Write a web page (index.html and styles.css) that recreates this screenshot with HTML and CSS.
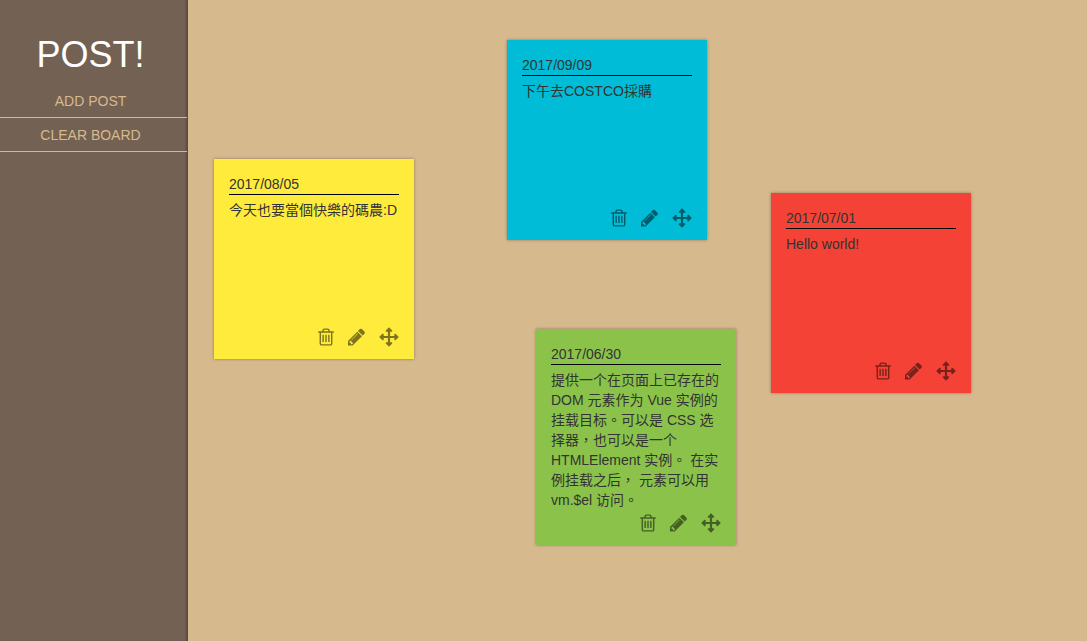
FILE: index.html
```html
<!DOCTYPE html>
<html lang="zh-Hant">
<head>
<meta charset="utf-8">
<meta name="viewport" content="width=device-width, initial-scale=1">
<title>POST!</title>
<link rel="stylesheet" href="styles.css">
</head>
<body>
<svg class="sprite" aria-hidden="true">
  <symbol id="trash" viewBox="179 0 1434 1792"><path d="M704 736v576q0 14-9 23t-23 9h-64q-14 0-23-9t-9-23v-576q0-14 9-23t23-9h64q14 0 23 9t9 23zm256 0v576q0 14-9 23t-23 9h-64q-14 0-23-9t-9-23v-576q0-14 9-23t23-9h64q14 0 23 9t9 23zm256 0v576q0 14-9 23t-23 9h-64q-14 0-23-9t-9-23v-576q0-14 9-23t23-9h64q14 0 23 9t9 23zm128 724v-948h-896v948q0 22 7 40.5t14.5 27 10.5 8.5h832q3 0 10.5-8.5t14.5-27 7-40.5zm-672-1076h448l-48-117q-7-9-17-11h-317q-10 2-17 11zm928 32v64q0 14-9 23t-23 9h-96v948q0 83-47 143.5t-113 60.5h-832q-66 0-113-58.5t-47-141.5v-952h-96q-14 0-23-9t-9-23v-64q0-14 9-23t23-9h309l70-167q15-37 54-63t79-26h320q40 0 79 26t54 63l70 167h309q14 0 23 9t9 23z"/></symbol>
  <symbol id="pencil" viewBox="128 0 1523 1792"><path d="M491 1536l91-91-235-235-91 91v107h128v128h107zm523-928q0-22-22-22-10 0-17 7l-542 542q-7 7-7 17 0 22 22 22 10 0 17-7l542-542q7-7 7-17zm-54-192l416 416-832 832h-416v-416zm683 96q0 53-37 90l-166 166-416-416 166-165q36-38 90-38 53 0 91 38l235 234q37 39 37 91z"/></symbol>
  <symbol id="arrows" viewBox="0 0 20 20"><path d="M10 0.2L13.2 3.4Q13.6 4.6 12.6 4.7H11.1V8.9H15.3V7.4Q15.4 6.4 16.6 6.8L19.8 10L16.6 13.2Q15.4 13.6 15.3 12.6V11.1H11.1V15.3H12.6Q13.6 15.4 13.2 16.6L10 19.8L6.8 16.6Q6.4 15.4 7.4 15.3H8.9V11.1H4.7V12.6Q4.6 13.6 3.4 13.2L0.2 10L3.4 6.8Q4.6 6.4 4.7 7.4V8.9H8.9V4.7H7.4Q6.4 4.6 6.8 3.4Z"/></symbol>
</svg>
<div class="app">
  <aside class="sidebar">
    <h1 class="title">POST!</h1>
    <nav class="menu">
      <a class="menu-item" href="#add">ADD POST</a>
      <a class="menu-item" href="#clear">CLEAR BOARD</a>
    </nav>
  </aside>
  <main class="board">
    <article class="note note-yellow">
      <time class="note-date" datetime="2017-08-05">2017/08/05</time>
      <p class="note-text">今天也要當個快樂的碼農:D</p>
      <div class="note-tools">
        <button class="tool" type="button" aria-label="Delete"><svg class="icon icon-trash"><use href="#trash"/></svg></button>
        <button class="tool" type="button" aria-label="Edit"><svg class="icon icon-pencil"><use href="#pencil"/></svg></button>
        <button class="tool tool-move" type="button" aria-label="Move"><svg class="icon icon-arrows"><use href="#arrows"/></svg></button>
      </div>
    </article>
    <article class="note note-blue">
      <time class="note-date" datetime="2017-09-09">2017/09/09</time>
      <p class="note-text">下午去COSTCO採購</p>
      <div class="note-tools">
        <button class="tool" type="button" aria-label="Delete"><svg class="icon icon-trash"><use href="#trash"/></svg></button>
        <button class="tool" type="button" aria-label="Edit"><svg class="icon icon-pencil"><use href="#pencil"/></svg></button>
        <button class="tool tool-move" type="button" aria-label="Move"><svg class="icon icon-arrows"><use href="#arrows"/></svg></button>
      </div>
    </article>
    <article class="note note-red">
      <time class="note-date" datetime="2017-07-01">2017/07/01</time>
      <p class="note-text">Hello world!</p>
      <div class="note-tools">
        <button class="tool" type="button" aria-label="Delete"><svg class="icon icon-trash"><use href="#trash"/></svg></button>
        <button class="tool" type="button" aria-label="Edit"><svg class="icon icon-pencil"><use href="#pencil"/></svg></button>
        <button class="tool tool-move" type="button" aria-label="Move"><svg class="icon icon-arrows"><use href="#arrows"/></svg></button>
      </div>
    </article>
    <article class="note note-green">
      <time class="note-date" datetime="2017-06-30">2017/06/30</time>
      <p class="note-text">提供一个在页面上已存在的 DOM 元素作为 Vue 实例的挂载目标。可以是 CSS 选择器，也可以是一个 HTMLElement 实例。 在实例挂载之后， 元素可以用 vm.$el 访问。</p>
      <div class="note-tools">
        <button class="tool" type="button" aria-label="Delete"><svg class="icon icon-trash"><use href="#trash"/></svg></button>
        <button class="tool" type="button" aria-label="Edit"><svg class="icon icon-pencil"><use href="#pencil"/></svg></button>
        <button class="tool tool-move" type="button" aria-label="Move"><svg class="icon icon-arrows"><use href="#arrows"/></svg></button>
      </div>
    </article>
  </main>
</div>
</body>
</html>
```
FILE: styles.css
```css
* {
  box-sizing: border-box;
}

body {
  margin: 0;
  color: #333;
  font: 14px/20px "Liberation Sans", Arial, "Noto Sans CJK TC", sans-serif;
}

.sprite {
  position: absolute;
  width: 0;
  height: 0;
}

.app {
  display: flex;
  min-height: 100vh;
}

/* Sidebar */
.sidebar {
  flex: 0 0 188px;
  padding-top: 35px;
  background: #736153;
  border-right: 1px solid #5c4b3e;
  box-shadow: inset -2px 0 2px -1px rgba(0, 0, 0, 0.25);
  text-align: center;
}

.title {
  margin: 0 0 9px;
  padding-right: 6px;
  color: #fff;
  font-size: 36px;
  font-weight: 400;
  line-height: 40px;
}

.menu {
  display: flex;
  flex-direction: column;
}

.menu-item {
  padding: 7px 6px 6px 0;
  border-bottom: 1px solid #d7b98e;
  color: #d7b98e;
  text-decoration: none;
}

/* Board */
.board {
  position: relative;
  flex: 1;
  background: #d7b98e;
}

.note {
  position: absolute;
  display: flex;
  flex-direction: column;
  width: 200px;
  min-height: 200px;
  padding: 15px 15px 12px;
  box-shadow: 0 0 3px rgba(0, 0, 0, 0.35);
}

.note-yellow {
  left: 26px;
  top: 159px;
  background: #ffeb3b;
}

.note-blue {
  left: 319px;
  top: 40px;
  background: #00bcd7;
}

.note-red {
  left: 583px;
  top: 193px;
  background: #f44336;
}

.note-green {
  left: 348px;
  top: 329px;
  background: #8bc34a;
}

.note-date {
  border-bottom: 1px solid #000;
}

.note-text {
  margin: 5px 0 0;
}

.note-tools {
  display: flex;
  justify-content: flex-end;
  gap: 14px;
  margin-top: auto;
  padding-top: 3px;
}

.tool {
  display: flex;
  padding: 0;
  border: 0;
  background: none;
  color: #000;
  opacity: 0.5;
  cursor: pointer;
}

.tool-move {
  cursor: move;
}

.icon {
  height: 20px;
  fill: currentColor;
}

.icon-trash {
  width: 16px;
}

.icon-pencil {
  width: 17px;
}

.icon-arrows {
  width: 20px;
}
```
